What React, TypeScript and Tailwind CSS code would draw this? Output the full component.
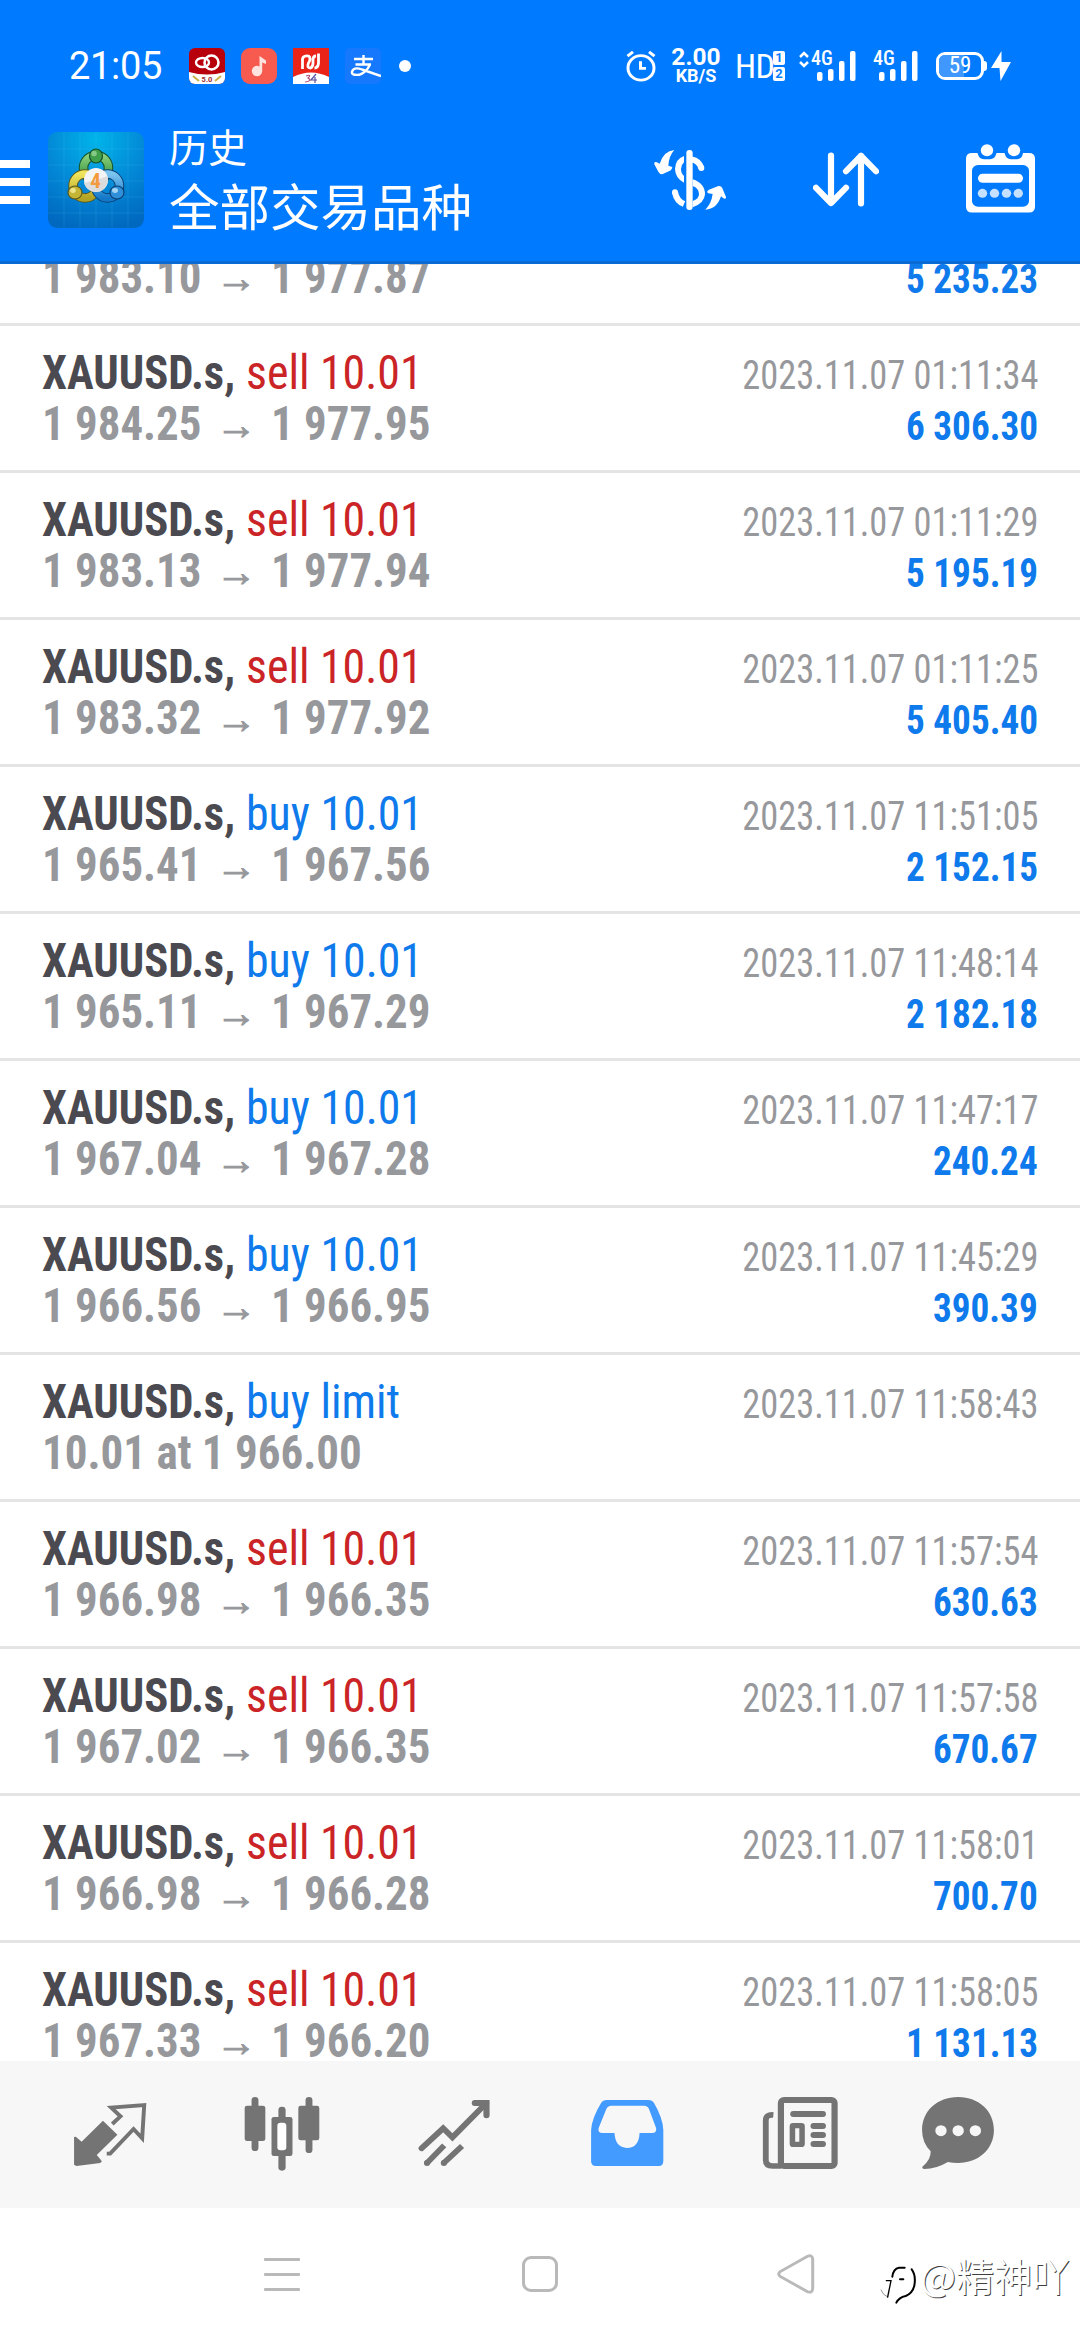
import React from 'react';
import clsx from 'clsx';

type Side = 'sell' | 'buy';

interface Deal {
  side: Side;
  label: string;
  open?: string;
  close?: string;
  note?: string;
  time: string;
  profit?: string;
}

const deals: Deal[] = [
  { side: 'sell', label: 'sell 10.01', open: '1 984.25', close: '1 977.95', time: '2023.11.07 01:11:34', profit: '6 306.30' },
  { side: 'sell', label: 'sell 10.01', open: '1 983.13', close: '1 977.94', time: '2023.11.07 01:11:29', profit: '5 195.19' },
  { side: 'sell', label: 'sell 10.01', open: '1 983.32', close: '1 977.92', time: '2023.11.07 01:11:25', profit: '5 405.40' },
  { side: 'buy', label: 'buy 10.01', open: '1 965.41', close: '1 967.56', time: '2023.11.07 11:51:05', profit: '2 152.15' },
  { side: 'buy', label: 'buy 10.01', open: '1 965.11', close: '1 967.29', time: '2023.11.07 11:48:14', profit: '2 182.18' },
  { side: 'buy', label: 'buy 10.01', open: '1 967.04', close: '1 967.28', time: '2023.11.07 11:47:17', profit: '240.24' },
  { side: 'buy', label: 'buy 10.01', open: '1 966.56', close: '1 966.95', time: '2023.11.07 11:45:29', profit: '390.39' },
  { side: 'buy', label: 'buy limit', note: '10.01 at 1 966.00', time: '2023.11.07 11:58:43' },
  { side: 'sell', label: 'sell 10.01', open: '1 966.98', close: '1 966.35', time: '2023.11.07 11:57:54', profit: '630.63' },
  { side: 'sell', label: 'sell 10.01', open: '1 967.02', close: '1 966.35', time: '2023.11.07 11:57:58', profit: '670.67' },
  { side: 'sell', label: 'sell 10.01', open: '1 966.98', close: '1 966.28', time: '2023.11.07 11:58:01', profit: '700.70' },
  { side: 'sell', label: 'sell 10.01', open: '1 967.33', close: '1 966.20', time: '2023.11.07 11:58:05', profit: '1 131.13' },
];

const SignalBars: React.FC = () => (
  <svg width="39" height="30" viewBox="0 0 39 30" fill="#fff">
    <rect x="0" y="21" width="5.5" height="9" rx="2" />
    <rect x="11" y="18" width="5.5" height="12" rx="2" />
    <rect x="22" y="10" width="5.5" height="20" rx="2" />
    <rect x="33" y="0" width="5.5" height="30" rx="2" />
  </svg>
);

const StatusBar: React.FC = () => (
  <div className="flex h-[132px] items-center px-[69px] font-[Roboto,sans-serif] text-white font-stretch-normal">
    <span className="w-[120px] whitespace-nowrap text-[38px] leading-[46px] tracking-[-0.3px]">21:05</span>

    <div className="flex gap-4">
      <svg width="36" height="36" viewBox="0 0 36 36">
        <clipPath id="bank"><rect width="36" height="36" rx="6" /></clipPath>
        <g clipPath="url(#bank)">
          <rect width="36" height="36" fill="#b8000c" />
          <path d="M0 24 Q18 29 36 24 V36 H0Z" fill="#fff" />
          <circle cx="22.500" cy="14.500" r="7" fill="none" stroke="#fff" strokeWidth="2.600" />
          <ellipse cx="13.500" cy="14.500" rx="6.500" ry="4.500" fill="none" stroke="#fff" strokeWidth="2.400" />
          <path d="M4 28 L10 33 M32 28 L26 33" stroke="#c9b24a" strokeWidth="2" />
          <text x="18" y="34" textAnchor="middle" fontSize="7.500" fontWeight="700" fill="#9b2a30">5.0</text>
        </g>
      </svg>
      <svg width="36" height="36" viewBox="0 0 36 36">
        <rect width="36" height="36" rx="9" fill="#f75b4f" />
        <circle cx="16" cy="23" r="5.200" fill="#ffe3df" />
        <path d="M18.500 23 V8 L25 12.500 V16 L21.200 14.500 V23Z" fill="#ffe3df" />
      </svg>
      <svg width="36" height="36" viewBox="0 0 36 36">
        <rect width="36" height="36" fill="#ea2418" />
        <path d="M0 29 Q18 20 36 29 V36 H0Z" fill="#fff" />
        <path d="M9.500 21 V11 Q10 8.500 12.500 8 Q17 7 17 11 Q17 13 15.500 15 Q13.500 20 17.500 20 Q20 19 20 15 V11 Q20.500 8 23 8 M25.500 5.500 V15 Q25 20 21.500 20" fill="none" stroke="#fff" strokeWidth="2.800" />
        <path d="M13 28 Q19 26 15 30 Q20 33 12 34" fill="none" stroke="#b0507a" strokeWidth="1.200" />
        <path d="M23 26 L18 32 H24 M22 29 V35" fill="none" stroke="#5a4fa0" strokeWidth="1.200" />
      </svg>
      <svg width="36" height="36" viewBox="0 0 36 36">
        <rect width="36" height="36" rx="5" fill="#1678fc" />
        <path d="M9 11 H28 M18.500 7 V16.500 M10.500 16.500 H26 M25 16.500 Q21 25 14 26.800 Q6 27.500 7 23.500 Q9 18.500 17 21.500 L36 28" fill="none" stroke="#fff" strokeWidth="2.400" />
      </svg>
    </div>
    <span className="ml-[18px] h-3 w-3 rounded-full bg-white" />

    <div className="ml-auto flex items-center">
      <svg width="30" height="32" viewBox="0 0 30 34" preserveAspectRatio="none" fill="none" stroke="#fff">
        <circle cx="15" cy="19" r="13" strokeWidth="3" />
        <path d="M14.500 12 V19.500 H20" strokeWidth="3" />
        <path d="M1.500 6.500 L7 2 M28.500 6.500 L23 2" strokeWidth="3" />
      </svg>
      <div className="ml-4 flex w-[48px] flex-col items-center whitespace-nowrap font-bold">
        <span className="text-[24.5px] leading-[20px]">2.00</span>
        <span className="text-[18px] leading-[18px]">KB/S</span>
      </div>
      <span className="ml-[15px] w-[38px] whitespace-nowrap text-[34px] font-normal leading-[36px] tracking-[-0.5px] font-stretch-condensed">HD</span>
      <div className="flex w-[12px] flex-col gap-[2px] text-center text-[13px] font-bold leading-[14px] text-[#0a7cff]">
        <span className="h-[14px] rounded-[2px] bg-white">1</span>
        <span className="h-[14px] rounded-[2px] bg-white">2</span>
      </div>
      <div className="relative ml-[14px] h-[30px] w-[57px]">
        <svg className="absolute left-0 top-0" width="10" height="17" viewBox="0 0 10 17" fill="none" stroke="#fff" strokeWidth="2.500">
          <path d="M1 6 L5 2 L9 6 M1 11 L5 15 L9 11" />
        </svg>
        <span className="absolute left-[12px] top-0 text-[20px] leading-[15px] font-medium font-stretch-condensed">4G</span>
        <div className="absolute left-[18px] top-0"><SignalBars /></div>
      </div>
      <div className="relative ml-[17px] h-[30px] w-[45px]">
        <span className="absolute left-0 top-0 text-[20px] leading-[15px] font-medium font-stretch-condensed">4G</span>
        <div className="absolute left-[6px] top-0"><SignalBars /></div>
      </div>
      <div className="relative ml-[18px] flex h-[28px] w-[48px] items-center justify-center rounded-[9px] border-[3px] border-white">
        <div className="absolute left-0 top-0 h-[22px] w-[25px] rounded-l-[6px] bg-[#4098ff]" />
        <span className="relative text-[23px] leading-[22px] font-normal font-stretch-semi-condensed">59</span>
        <div className="absolute -right-[6px] top-[6px] h-[10px] w-[3px] rounded-r-full bg-white" />
      </div>
      <svg className="ml-[7px]" width="20" height="30" viewBox="0 0 20 30" fill="#fff">
        <path d="M10.500 0 L0 17 H8.500 L9.500 30 L20 11 H10.500Z" />
      </svg>
    </div>
  </div>
);

const AppLogo: React.FC = () => (
  <svg width="96" height="96" viewBox="0 0 96 96">
    <defs>
      <radialGradient id="sky" cx="0.5" cy="0.08" r="0.95">
        <stop offset="0" stopColor="#00b4ea" />
        <stop offset="0.55" stopColor="#0387d6" />
        <stop offset="1" stopColor="#0068bf" />
      </radialGradient>
      <linearGradient id="green" x1="0" y1="0" x2="0" y2="1">
        <stop offset="0" stopColor="#8ad07c" />
        <stop offset="1" stopColor="#2c8a3a" />
      </linearGradient>
      <linearGradient id="yellow" x1="0" y1="0" x2="0" y2="1">
        <stop offset="0" stopColor="#f0e45c" />
        <stop offset="1" stopColor="#b3a325" />
      </linearGradient>
      <linearGradient id="blue" x1="0" y1="0" x2="0" y2="1">
        <stop offset="0" stopColor="#7cc4f0" />
        <stop offset="1" stopColor="#1478c8" />
      </linearGradient>
    </defs>
    <rect width="96" height="96" rx="9" fill="url(#sky)" />
    <path d="M16 0V96M32 0V96M48 0V96M64 0V96M80 0V96M0 17H96M0 33H96M0 49H96M0 65H96M0 81H96" stroke="#5cc4ef" strokeOpacity="0.16" />
    <g fill="none">
      <circle cx="48" cy="36" r="12.500" stroke="#14532a" strokeWidth="9.500" />
      <circle cx="48" cy="36" r="12.500" stroke="url(#green)" strokeWidth="7.500" />
      <circle cx="37" cy="54" r="12" stroke="#5c571c" strokeWidth="9.500" />
      <circle cx="37" cy="54" r="12" stroke="url(#yellow)" strokeWidth="7.500" />
      <circle cx="59.500" cy="54" r="12" stroke="#0b3f73" strokeWidth="9.500" />
      <circle cx="59.500" cy="54" r="12" stroke="url(#blue)" strokeWidth="7.500" />
    </g>
    <ellipse cx="48" cy="24" rx="6.500" ry="7" fill="#3f9e49" stroke="#14532a" strokeWidth="1.200" />
    <ellipse cx="46" cy="21.500" rx="2.800" ry="2.800" fill="#a4dca0" fillOpacity="0.7" />
    <ellipse cx="27" cy="60.500" rx="7" ry="6.500" fill="#c4b537" stroke="#5c571c" strokeWidth="1.200" />
    <ellipse cx="25" cy="58.500" rx="2.800" ry="2.400" fill="#f6efa0" fillOpacity="0.8" />
    <ellipse cx="69" cy="60.500" rx="7" ry="6.500" fill="#2f8fd8" stroke="#0b3f73" strokeWidth="1.200" />
    <ellipse cx="67" cy="58.500" rx="3" ry="2.400" fill="#bfe3fa" fillOpacity="0.8" />
    <circle cx="48" cy="48" r="12" fill="#f4f4f4" />
    <path d="M36 51 Q48 49 59.500 44 A12 12 0 0 1 36 51Z" fill="#dcdcdc" />
    <text x="47.500" y="55.500" textAnchor="middle" fontSize="21" fontWeight="700" fontFamily="Roboto" fill="#f39a3c">4</text>
  </svg>
);

const Header: React.FC = () => (
  <div className="flex h-[129px] text-white">
    <button className="mt-[28px] flex h-[44px] w-[30px] flex-col justify-between">
      <span className="h-2 w-[30px] bg-white" />
      <span className="h-2 w-[30px] bg-white" />
      <span className="h-2 w-[30px] bg-white" />
    </button>
    <div className="ml-[18px] h-[96px] w-[96px]"><AppLogo /></div>
    <div className="-mt-[14px] ml-[25px] whitespace-nowrap font-['Noto_Sans_CJK_SC',sans-serif]">
      <div className="text-[39px] leading-[54px]">历史</div>
      <div className="text-[50.5px] leading-[65px]">全部交易品种</div>
    </div>
    <div className="mr-[45px] ml-auto flex">
      <svg className="mt-[17px]" width="75" height="63" viewBox="21 12 225 189" fill="#fff">
        <rect x="124" y="15" width="19" height="180" rx="9" />
        <path d="M117 33 Q91 42 90 72 Q91 100 117 113 V93 Q108 85 108 72 Q108 60 117 52Z" />
        <path d="M143 103 Q180 115 180 148 Q178 175 143 187 V168 Q162 162 162 147 Q162 130 143 123Z" />
        <path d="M140 43 Q162 47 169 69 M90 142 Q95 168 117 177" fill="none" stroke="#fff" strokeWidth="18" />
        <circle cx="169" cy="69" r="9" />
        <circle cx="90" cy="142" r="9" />
        <path d="M88 15 Q72 32 70 62 L82 66 Q80 78 68 80 L52 88 Q44 88 40 80 L28 58 Q26 48 36 52 L44 56 Q56 18 88 15Z" />
        <path d="M181 194 Q199 176 203 147 L190 145 Q182 140 192 134 L220 123 Q230 122 233 132 L243 156 Q244 164 235 160 L228 154 Q216 192 181 194Z" />
      </svg>
      <svg className="mt-[20px] ml-[86px]" width="66" height="55" viewBox="813 157.500 66 57" preserveAspectRatio="none" fill="none" stroke="#fff" strokeWidth="6.200" strokeLinecap="round" strokeLinejoin="round">
        <path d="M831 161 V210 M816 194.500 L831 210.500 L846 194.500 M861 211 V161.500 M846 177.500 L861 161.500 L876 177.500" />
      </svg>
      <svg className="mt-[12px] ml-[87px]" width="69" height="69" viewBox="966 148.500 69 72" preserveAspectRatio="none">
        <path d="M972 158 H977.500 Q979 164.500 984 164.500 H990 Q995 164.500 996.500 158 H1004.500 Q1006 164.500 1011 164.500 H1017 Q1022 164.500 1023 158 H1029 Q1035 158 1035 164 V214 Q1035 220 1029 220 H972 Q966 220 966 214 V164 Q966 158 972 158Z" fill="#fff" />
        <rect x="972" y="170.500" width="57" height="43.500" rx="6" fill="#007aff" />
        <circle cx="987" cy="155" r="6.200" fill="#fff" />
        <circle cx="1014" cy="155" r="6.200" fill="#fff" />
        <rect x="978" y="179.500" width="45" height="9.500" rx="4.700" fill="#fff" />
        <g fill="#c6e0ff">
          <circle cx="982.500" cy="200" r="4.700" />
          <circle cx="994.500" cy="200" r="4.700" />
          <circle cx="1006.500" cy="200" r="4.700" />
          <circle cx="1018.300" cy="200" r="4.700" />
        </g>
      </svg>
    </div>
  </div>
);

interface PriceLineProps {
  open?: string;
  close?: string;
  note?: string;
  profit?: string;
}

const PriceLine: React.FC<PriceLineProps> = ({ open, close, note, profit }) => (
  <div className="flex h-[51px] items-baseline justify-between">
    <span className="flex items-baseline text-[48px] leading-[51px] font-bold text-[#97989c]">
      {note ? (
        <span className="origin-left scale-x-[0.938]">{note}</span>
      ) : (
        <>
          <span className="w-[174px] origin-left scale-x-[0.935]">{open}</span>
          <span className="relative -top-px w-[55px] font-['Noto_Sans'] text-[41px] leading-[44px] [-webkit-text-stroke:1px_#97989c]">→</span>
          <span className="origin-left scale-x-[0.935]">{close}</span>
        </>
      )}
    </span>
    <span className="origin-right scale-x-[0.93] text-[40px] leading-[51px] font-bold text-[#0f7aeb]">{profit}</span>
  </div>
);

const DealRow: React.FC<{ deal: Deal }> = ({ deal }) => (
  <div className="h-[147px] shrink-0 border-b-[3px] border-[#e4e4e4] pt-[21px] pr-[42px] pl-[42px]">
    <div className="flex h-[51px] items-baseline justify-between">
      <span className="flex items-baseline text-[48px] leading-[51px]">
        <b className="w-[204px] origin-left scale-x-[0.93] font-bold text-[#4b4a50]">XAUUSD.s,</b>
        <span className={clsx('origin-left scale-x-[0.955]', deal.side === 'sell' ? 'text-[#cb2427]' : 'text-[#0f7aeb]')}>
          {deal.label}
        </span>
      </span>
      <span className="origin-right scale-x-[0.91] text-[40px] leading-[51px] text-[#97989c]">{deal.time}</span>
    </div>
    <PriceLine open={deal.open} close={deal.close} note={deal.note} profit={deal.profit} />
  </div>
);

const TabBar: React.FC = () => (
  <div className="flex h-[147px] shrink-0 bg-[#f7f7f7] pt-[36px] pl-[72px] text-[#747474]">
    <svg width="76" height="74" viewBox="209 171 221 222" preserveAspectRatio="none" fill="currentColor">
      <path d="M299 242 L341 284 L281 345 L296 364 L291 369 L222 378 L215 374 V291 L220 290 L237 305Z" />
      <path d="M326 252 L350 229 L323 203 L419 195 L413 295 L388 267 L320 341 L310 341" fill="none" stroke="currentColor" strokeWidth="11.500" />
    </svg>
    <svg className="ml-24" width="76" height="74" viewBox="707 171 221 222" preserveAspectRatio="none" fill="currentColor">
      <rect x="729" y="171" width="20" height="162" rx="10" />
      <rect x="709" y="197" width="60" height="106" rx="7" />
      <rect x="886" y="171" width="20" height="168" rx="10" />
      <rect x="865" y="197" width="61" height="104" rx="7" />
      <rect x="807" y="200" width="21" height="50" rx="10" />
      <rect x="807" y="330" width="21" height="62" rx="10" />
      <rect x="787" y="231" width="61" height="117" rx="7" />
      <rect x="804" y="248" width="26" height="83" rx="9" fill="#fff" />
    </svg>
    <svg className="ml-24" width="76" height="74" viewBox="1206 171 221 222" preserveAspectRatio="none" fill="none" stroke="currentColor" strokeWidth="17">
      <path d="M1222 325 L1285 265 L1312 292 L1410 190" strokeLinecap="round" />
      <path d="M1377 189 H1411 V226" strokeLinecap="round" strokeWidth="18" />
      <path d="M1237 370 L1288 316 M1286 370 L1340 318" />
      <circle cx="1238" cy="369" r="9" fill="currentColor" stroke="none" />
      <circle cx="1287" cy="369" r="9" fill="currentColor" stroke="none" />
    </svg>
    <svg className="ml-24" width="76" height="74" viewBox="137 171 221 222" preserveAspectRatio="none">
      <path d="M192 180 H312 Q324 180 329 189 Q355 235 356 270 V364 Q356 378 343 378 H160 Q146 378 146 364 V270 Q148 235 175 189 Q180 180 192 180Z" fill="#439bff" />
      <path d="M205 197 H300 Q310 197 314 206 L335 264 Q338 279 323 279 H287 Q285 324 250 324 Q216 322 214 279 H180 Q164 279 168 264 L190 208 Q194 197 205 197Z" fill="#f7f7f7" />
    </svg>
    <svg className="ml-[98px]" width="76" height="74" viewBox="644 171 221 222" preserveAspectRatio="none" fill="none" stroke="currentColor">
      <rect x="699" y="180" width="156" height="198" rx="9" strokeWidth="18" />
      <path d="M677 225 Q655 223 655 242 V360 Q655 378 675 378 H700" strokeWidth="17" />
      <path d="M735 222 H821 M794 258 H821 M794 285 H821 M794 312 H821" strokeWidth="18" strokeLinecap="round" />
      <rect x="732.500" y="257" width="28" height="56" rx="2" strokeWidth="16" />
    </svg>
    <svg className="ml-[82px]" width="76" height="74" viewBox="1103 171 221 222" preserveAspectRatio="none">
      <path d="M1214 171 C1275 171 1318 214 1318 270 C1318 328 1272 369 1214 369 Q1198 369 1184 366 Q1150 387 1116 387 Q1108 386 1110 380 Q1135 360 1134 334 Q1109 308 1109 270 C1109 214 1152 171 1214 171Z" fill="currentColor" />
      <circle cx="1164" cy="272" r="16.500" fill="#f7f7f7" />
      <circle cx="1214" cy="272" r="16.500" fill="#f7f7f7" />
      <circle cx="1264" cy="272" r="16.500" fill="#f7f7f7" />
    </svg>
  </div>
);

const SystemNav: React.FC = () => (
  <div className="flex h-[132px] shrink-0 bg-white pl-[264px]">
    <svg className="mt-[50px]" width="36" height="33" viewBox="0 0 36 33" fill="#b9b9b9">
      <rect width="36" height="3" rx="1" />
      <rect y="15" width="36" height="3" rx="1" />
      <rect y="30" width="36" height="3" rx="1" />
    </svg>
    <div className="mt-[48px] ml-[222px] h-9 w-9 rounded-[9px] border-[3px] border-[#b9b9b9]" />
    <svg className="mt-[46px] ml-[219px]" width="38" height="40" viewBox="0 0 38 42" preserveAspectRatio="none" fill="none" stroke="#b9b9b9" strokeWidth="3">
      <path d="M3.200 18.500 L30.500 2.400 Q35.500 0.500 35.700 5.500 V36 Q35.500 41.500 30.500 39.600 L3.200 23.500 Q0.200 21 3.200 18.500Z" />
    </svg>
    <div className="mt-[43px] ml-[64px] flex items-start">
      <svg className="mt-[14px]" width="40" height="40" viewBox="24 45 120 120" fill="none" stroke="#000" strokeLinecap="round">
        <path d="M30 120 Q36 136 50 141" stroke="#999" strokeWidth="3" />
        <path d="M50 141 L60 92 H46" strokeWidth="4" />
        <path d="M64 80 Q67 56 84 53 H101" strokeWidth="6" />
        <path d="M122 58 Q134 74 131 100 Q128 128 104 138 Q84 142 76 158" strokeWidth="6" />
        <path d="M87 88 H97" strokeWidth="6" />
      </svg>
      <span className="ml-px whitespace-nowrap font-['Noto_Sans_CJK_SC',sans-serif] text-[38px] leading-[48px] text-white [text-shadow:1px_1px_0.5px_#000000c0]">
        @精神吖
      </span>
    </div>
  </div>
);

export default function App() {
  return (
    <div className="flex h-[2340px] w-[1080px] flex-col overflow-hidden bg-white font-['Roboto_Condensed',Roboto,sans-serif] font-stretch-condensed">
      <div className="h-[264px] shrink-0 border-b-[3px] border-[#0a6ad4] bg-[#007aff]">
        <StatusBar />
        <Header />
      </div>
      <div className="flex h-[1797px] shrink-0 flex-col overflow-hidden whitespace-nowrap">
        {/* row scrolled halfway under the header */}
        <div className="flex h-[62px] shrink-0 flex-col justify-end overflow-hidden border-b-[3px] border-[#e4e4e4] pr-[42px] pb-[21px] pl-[42px]">
          <PriceLine open="1 983.10" close="1 977.87" profit="5 235.23" />
        </div>
        {deals.map((deal) => (
          <DealRow key={deal.time} deal={deal} />
        ))}
      </div>
      <TabBar />
      <SystemNav />
    </div>
  );
}
